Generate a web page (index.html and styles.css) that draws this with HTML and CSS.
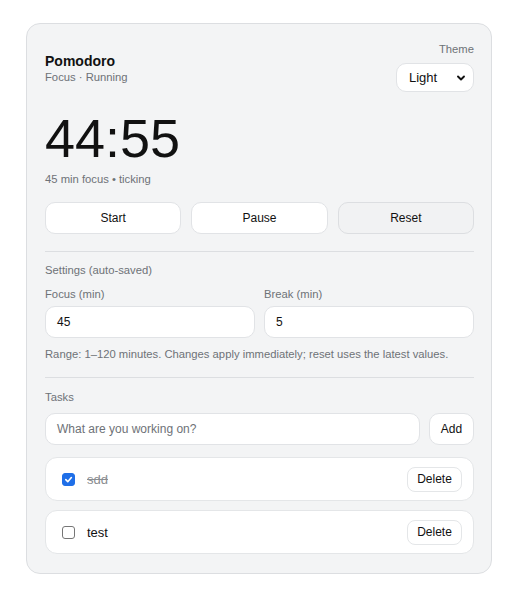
FILE: index.html
```html
<!DOCTYPE html>
<html>
<head>
<meta charset="utf-8">
<link rel="stylesheet" href="styles.css">
</head>
<body>
<div class="card">
  <div class="header">
    <div class="title-block">
      <div class="title">Pomodoro</div>
      <div class="muted sub">Focus · Running</div>
    </div>
    <div class="theme">
      <div class="muted">Theme</div>
      <div class="select">
        <span>Light</span>
        <svg width="10" height="10" viewBox="0 0 10 10"><path d="M2 3.5 L5 6.5 L8 3.5" fill="none" stroke="#111" stroke-width="1.9" stroke-linecap="round" stroke-linejoin="round"/></svg>
      </div>
    </div>
  </div>
  <div class="timer">44:55</div>
  <div class="muted status">45 min focus • ticking</div>
  <div class="btn-row">
    <button class="btn">Start</button>
    <button class="btn">Pause</button>
    <button class="btn btn-alt">Reset</button>
  </div>
  <hr class="divider">
  <div class="muted section">Settings (auto-saved)</div>
  <div class="fields">
    <div class="field">
      <div class="muted label">Focus (min)</div>
      <div class="input">45</div>
    </div>
    <div class="field">
      <div class="muted label">Break (min)</div>
      <div class="input">5</div>
    </div>
  </div>
  <div class="muted hint">Range: 1–120 minutes. Changes apply immediately; reset uses the latest values.</div>
  <hr class="divider d2">
  <div class="muted section">Tasks</div>
  <div class="add-row">
    <div class="input placeholder">What are you working on?</div>
    <button class="btn add">Add</button>
  </div>
  <div class="tasks">
    <div class="task">
      <span class="check checked"><svg width="9" height="9" viewBox="0 0 10 10"><path d="M2 5.2 L4.2 7.4 L8.2 2.8" fill="none" stroke="#fff" stroke-width="1.8" stroke-linecap="round" stroke-linejoin="round"/></svg></span>
      <span class="task-text done">sdd</span>
      <button class="del">Delete</button>
    </div>
    <div class="task">
      <span class="check"></span>
      <span class="task-text">test</span>
      <button class="del">Delete</button>
    </div>
  </div>
</div>
</body>
</html>
```
FILE: styles.css
```css
html, body {
  margin: 0;
  padding: 0;
  background: #ffffff;
}
body {
  font-family: "Liberation Sans", Arial, sans-serif;
  color: #111111;
  padding: 23px 0 0 26px;
}
.card {
  width: 429px;
  background: #f3f4f5;
  border: 1px solid #dcdee1;
  border-radius: 14px;
  padding: 17px 17px 19px 18px;
}
.muted {
  color: #6e7277;
  font-size: 11.25px;
}
.header {
  display: flex;
  justify-content: space-between;
  align-items: flex-start;
}
.title-block {
  padding-top: 12px;
}
.title {
  font-size: 14px;
  font-weight: 700;
  line-height: 17px;
}
.sub {
  line-height: 15px;
}
.theme {
  display: flex;
  flex-direction: column;
  align-items: flex-end;
  gap: 7px;
  padding-top: 2px;
}
.theme .muted {
  line-height: 13px;
}
.select {
  box-sizing: border-box;
  width: 78px;
  height: 29px;
  background: #ffffff;
  border: 1px solid #e1e3e6;
  border-radius: 10px;
  display: flex;
  align-items: center;
  justify-content: space-between;
  padding: 0 7px 0 12px;
  font-size: 13px;
}
.timer {
  font-size: 54px;
  line-height: 56px;
  margin-top: 18px;
}
.status {
  margin-top: 6px;
  line-height: 14px;
}
.btn-row {
  display: grid;
  grid-template-columns: 1fr 1fr 1fr;
  gap: 10px;
  margin-top: 16px;
}
.btn {
  font-family: inherit;
  font-size: 12px;
  color: #111;
  height: 32px;
  background: #ffffff;
  border: 1px solid #e1e3e6;
  border-radius: 10px;
  padding: 0;
}
.btn-alt {
  background: #f1f2f3;
  border-color: #dcdee1;
}
.divider {
  border: none;
  border-top: 1px solid #dcdee1;
  margin: 17px 0 0 0;
}
.section {
  margin-top: 11px;
  line-height: 14px;
}
.fields {
  display: grid;
  grid-template-columns: 1fr 1fr;
  gap: 9px;
  margin-top: 10px;
}
.label {
  line-height: 14px;
}
.input {
  box-sizing: border-box;
  height: 32px;
  margin-top: 5px;
  background: #ffffff;
  border: 1px solid #e1e3e6;
  border-radius: 10px;
  display: flex;
  align-items: center;
  padding: 0 11px;
  font-size: 12px;
}
.hint {
  margin-top: 9px;
  line-height: 14px;
}
.d2 {
  margin-top: 16px;
}
.d2 + .section {
  margin-top: 12px;
}
.add-row {
  display: flex;
  gap: 9px;
  margin-top: 9px;
}
.add-row .input {
  flex: 1;
  margin-top: 0;
  color: #6e7277;
  font-size: 12px;
}
.add {
  width: 45px;
}
.tasks {
  display: flex;
  flex-direction: column;
  gap: 9px;
  margin-top: 12px;
}
.task {
  box-sizing: border-box;
  height: 44px;
  background: #ffffff;
  border: 1px solid #e4e6e8;
  border-radius: 12px;
  display: flex;
  align-items: center;
  padding: 0 11px 0 16px;
}
.check {
  box-sizing: border-box;
  width: 13px;
  height: 13px;
  border: 1px solid #767676;
  border-radius: 3px;
  display: flex;
  align-items: center;
  justify-content: center;
  background: #fff;
}
.check.checked {
  background: #1f6fe8;
  border-color: #1f6fe8;
}
.task-text {
  margin-left: 12px;
  font-size: 13px;
  flex: 1;
}
.task-text.done {
  color: #8a8d91;
  text-decoration: line-through;
}
.del {
  font-family: inherit;
  font-size: 12px;
  color: #111;
  width: 55px;
  height: 25px;
  background: #ffffff;
  border: 1px solid #e4e6e8;
  border-radius: 8px;
  padding: 0;
}
```
